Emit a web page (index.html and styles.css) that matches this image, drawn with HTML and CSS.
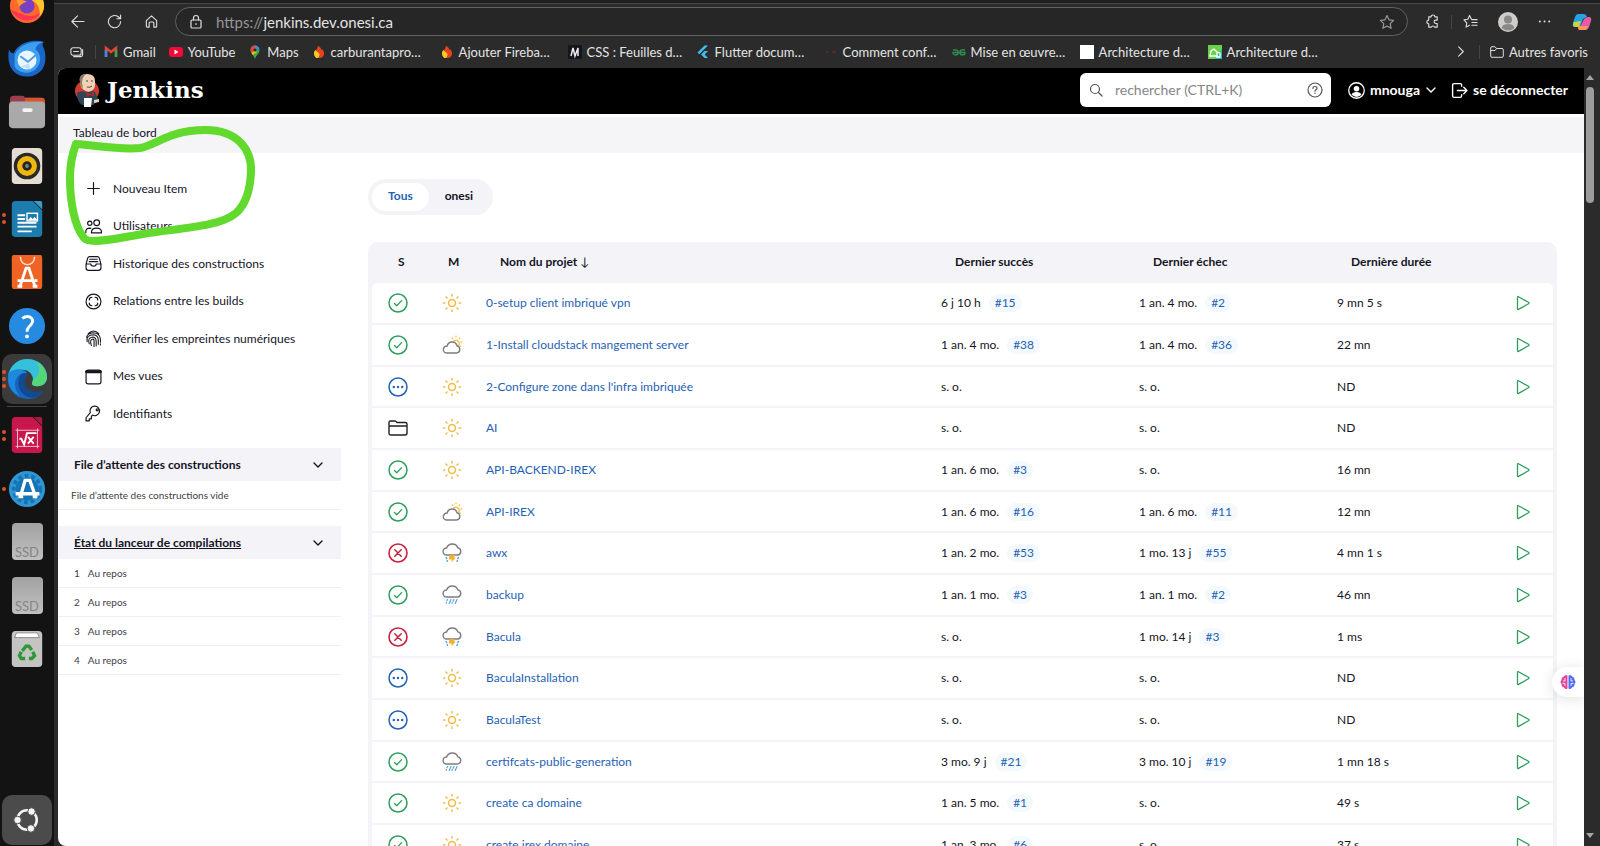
FILE: index.html
```html
<!DOCTYPE html>
<html lang="fr">
<head>
<meta charset="UTF-8">
<meta name="viewport" content="width=device-width, initial-scale=1.0">
<title>Tableau de bord [Jenkins]</title>
<link rel="stylesheet" href="styles.css">
</head>
<body>

<!-- Shared icons -->
<svg class="sprite" aria-hidden="true">
    <symbol id="ok" viewBox="0 0 20 20"><g fill="none" stroke="#2f9e5b" stroke-linecap="round" stroke-linejoin="round"><circle cx="10" cy="10" r="9" stroke-width="1.5"/><path d="M6.5 10.5l2.3 2.3 4.8-5.2" stroke-width="1.3"/></g></symbol>
    <symbol id="ko" viewBox="0 0 20 20"><g fill="none" stroke="#c8203f" stroke-linecap="round"><circle cx="10" cy="10" r="9" stroke-width="1.6"/><path d="M6.8 6.8l6.4 6.4M13.2 6.8l-6.4 6.4" stroke-width="1.5"/></g></symbol>
    <symbol id="new" viewBox="0 0 20 20"><circle cx="10" cy="10" r="9" fill="none" stroke="#1f62b5" stroke-width="1.5"/><g fill="#1f62b5"><circle cx="5.8" cy="10" r="1.2"/><circle cx="10" cy="10" r="1.2"/><circle cx="14.2" cy="10" r="1.2"/></g></symbol>
    <symbol id="folder" viewBox="0 0 20 20"><path d="M1 15V4.500Q1 3 2.500 3h4.200q.8 0 1.300.6L9 4.500h8.300Q19 4.500 19 6v9q0 2-2 2H3q-2 0-2-2zM1 8h18" fill="none" stroke="#222" stroke-width="1.400" stroke-linejoin="round"/></symbol>
    <symbol id="sunny" viewBox="0 0 20 20"><g fill="none" stroke="#f2bb45" stroke-width="1.500" stroke-linecap="round"><circle cx="10" cy="10" r="3.500"/><path d="M10 1.500v1.400M10 17.100v1.400M1.500 10h1.400M17.100 10h1.400M4 4l1 1M15 15l1 1M4 16l1-1M15 5l1-1"/></g></symbol>
    <symbol id="cloudy" viewBox="0 0 20 20"><g fill="none" stroke-linecap="round"><path d="M11.500 6.500a3.200 3.200 0 1 1 5 4M14 1.200v.6M19 7h.5M10.300 3l.4.400M17.700 3l-.4.400M18 11l.4.400" stroke="#f2bb45" stroke-width="1.300"/><path d="M4.500 18h10a3.600 3.600 0 0 0 .5-7.100A5 5 0 0 0 5.200 11 3.500 3.500 0 0 0 4.500 18z" stroke="#7c7c80" stroke-width="1.400"/></g></symbol>
    <symbol id="rain" viewBox="0 0 20 20"><path d="M4.500 12h11a3.600 3.600 0 0 0 .4-7.100A6 6 0 0 0 4.600 5 3.500 3.500 0 0 0 4.500 12z" fill="none" stroke="#7c7c80" stroke-width="1.400"/><path d="M5.500 14.500l-.7 1.200M9 14.500l-1.800 4M12 14.500l-.8 1.600M15 14.500l-1.800 4M4.500 17.500l-.3.700M10.300 17.500l-.4.800" fill="none" stroke="#4fa3e0" stroke-width="1.200" stroke-linecap="round"/></symbol>
    <symbol id="storm" viewBox="0 0 20 20"><path d="M4.500 12h11a3.600 3.600 0 0 0 .4-7.100A6 6 0 0 0 4.600 5 3.500 3.500 0 0 0 4.500 12z" fill="#fff" stroke="#7c7c80" stroke-width="1.400"/><path d="M7.500 12h5.500l-.8 2.500h1.600L9.500 19.500l.3-3H6.800z" fill="#f0b22e"/><path d="M4 14.500l.8 1M5 17.500l.6.800M16.500 14.500l-.8 1M15.500 17.500l-.6.800" fill="none" stroke="#4fa3e0" stroke-width="1.300" stroke-linecap="round"/></symbol>
    <symbol id="play" viewBox="0 0 16 16"><path d="M2.500 2.200v11.600q0 1.100 1 .6l10-5.600q1-.8 0-1.500l-10-5.600q-1-.6-1 .5z" fill="none" stroke="#2f9e5b" stroke-width="1.300" stroke-linejoin="round"/></symbol>
    <symbol id="chevron" viewBox="0 0 12 12"><path d="M2 4l4 4 4-4" fill="none" stroke="currentColor" stroke-width="1.400" stroke-linecap="round" stroke-linejoin="round"/></symbol>
    <symbol id="flame" viewBox="0 0 14 14"><path d="M2 9c0-4 3-3 4-8 3 1 3 3 3 4l1-1c4 4 2 9-3 9-3 0-5-2-5-4z" fill="#e8431f"/><path d="M2 8c0-1 .5-2 1.500-3 1 2 3 2 4 4 0 2-1 4-2 4C3.500 13 2 11 2 8z" fill="#ffc928"/></symbol>
</svg>

<!-- Ubuntu dock -->
<nav class="dock" aria-label="Dock">
    <button class="dock-item" aria-label="Firefox">
        <svg viewBox="0 0 40 40"><circle cx="20" cy="20" r="18" fill="#ff6a2b"/><path d="M3 24a18 18 0 0 0 34-2c-5 9-14 10-21 7z" fill="#ff3355"/><path d="M20 2c10 0 18 8 18 18 0 4-2 8-5 11 2-10-4-17-13-19z" fill="#ffc62b"/><circle cx="20" cy="20" r="8" fill="#7b3fc4"/><path d="M8 12c5 0 9 3 12 3-3 2-6 2-8 6z" fill="#ff9a2b"/></svg>
    </button>
    <button class="dock-item" aria-label="Thunderbird">
        <svg viewBox="0 0 40 40"><path d="M1 10c1 3 3 4 5 4C10 4 24-2 38 2c-2 2-2 3-1 5 3 6 3 14 1 20-4 10-16 14-26 10C2 33-1 22 1 10z" fill="#1a66c8"/><path d="M7 16C11 6 22 1 37 2c-6 2-8 5-8 8 6 4 7 14 0 21-8 6-18 4-22-3z" fill="#3d9ff0"/><circle cx="20" cy="21" r="10" fill="#eaf6ff"/><path d="M13 17l8 6 8-7" fill="none" stroke="#4a9be0" stroke-width="2"/><path d="M13 28l11 3-2-6z" fill="#bfe0f8"/></svg>
    </button>
    <button class="dock-item" aria-label="Fichiers">
        <svg viewBox="0 0 40 40"><path d="M2 7q0-4 4-4h9q2 0 3 2h17q4 0 4 4v12H2z" fill="#9c3f4c"/><path d="M18 5h17q4 0 4 4v4H18z" fill="#d4562b"/><rect x="1" y="9" width="38" height="28" rx="4" fill="#a9a9a9"/><rect x="15" y="16" width="11" height="4" rx="2" fill="#f4f4f4"/></svg>
    </button>
    <button class="dock-item" aria-label="Rhythmbox">
        <svg viewBox="0 0 40 40"><rect x="4" y="1" width="32" height="38" rx="4" fill="#e5ddd3"/><circle cx="20" cy="20" r="14" fill="#292929"/><circle cx="20" cy="20" r="10.500" fill="#efb70e"/><circle cx="20" cy="20" r="5" fill="#252525"/><circle cx="20" cy="20" r="2" fill="#808080"/></svg>
    </button>
    <button class="dock-item" aria-label="LibreOffice Writer">
        <span class="dots"><i></i><i></i></span>
        <svg viewBox="0 0 40 40"><path d="M4 5q0-4 4-4h18l10 10v24q0 4-4 4H8q-4 0-4-4z" fill="#1c7cae"/><path d="M27 1h7q2 0 2 2v7z" fill="#3b9cc6"/><path d="M10 16h8M10 20h8M10 24h20M10 28h20M10 33h15" stroke="#fff" stroke-width="2"/><rect x="20" y="14" width="11" height="8" fill="none" stroke="#fff" stroke-width="1.500"/><path d="M21 21l3-3 2 2 2-2 3 3z" fill="#fff"/></svg>
    </button>
    <button class="dock-item" aria-label="Logiciels">
        <svg viewBox="0 0 40 40"><path d="M6 2h28q2 0 2 3v30q0 3-3 3H7q-3 0-3-3L4 5q0-3 2-3z" fill="#ef6425"/><path d="M13 4c0 11 15 11 15 0" fill="none" stroke="#ffe5d8" stroke-width="1.500"/><path d="M13 34l6-18h3l6 18M10 29h21M10 35h5M26 35h5" fill="none" stroke="#fff" stroke-width="3"/></svg>
    </button>
    <button class="dock-item" aria-label="Aide">
        <svg viewBox="0 0 40 40"><circle cx="20" cy="20" r="19" fill="#268be0"/><path d="M15 12q6-4 10 0c3 4-1 7-3 9q-2 2-2 5" fill="none" stroke="#fff" stroke-width="3"/><circle cx="20" cy="31" r="2" fill="#fff"/></svg>
    </button>
    <button class="dock-item" aria-label="Microsoft Edge">
        <span class="dots"><i></i><i></i><i></i></span>
        <span class="tile active-tile"><svg viewBox="0 0 40 40"><path d="M1 16C-1 30 9 40 21 40c7 0 12-3 15-8-5 2-10 2-14-1-5-3-7-8-4-13-5-8-14-8-17-2z" fill="#1565c0"/><path d="M1 17C3 6 11 0 20 0c12 0 20 8 20 18 0 7-6 10-12 9-5-1-2-4-2-7-1-7-7-10-13-9-6 0-10 2-12 6z" fill="#35c0dc"/><path d="M30 3c6 3 10 9 10 15 0 7-6 10-12 9-5-1-2-4-2-7 6-2 8-9 4-17z" fill="#55d67b"/><path d="M17 13c-8 5-8 20 4 25 6 2 12-1 15-6-8 3-16 0-18-7-1-4 0-7 3-9 0-2-2-3-4-3z" fill="#124a91"/><path d="M2 14c5-5 14-5 18 0-9-1-12 6-12 12 0 4 2 8 5 11C4 34-1 24 2 14z" fill="#1e88dd"/></svg></span>
    </button>
    <span class="dock-line"></span>
    <button class="dock-item" aria-label="LibreOffice Math">
        <span class="dots"><i></i><i></i></span>
        <svg viewBox="0 0 40 40"><path d="M4 5q0-4 4-4h18l10 10v24q0 4-4 4H8q-4 0-4-4z" fill="#c8174c"/><path d="M27 1h7q2 0 2 2v7z" fill="#a91943"/><path d="M10 13v21M31 13v21M8 15h25M8 32h25" stroke="#f5bdcb"/><path d="M12 24h2l3 6 3-12h10M21 22l6 7M27 22l-6 7" fill="none" stroke="#fff" stroke-width="2"/></svg>
    </button>
    <button class="dock-item" aria-label="Mises à jour">
        <span class="dots"><i></i></span>
        <svg viewBox="0 0 40 40"><circle cx="20" cy="20" r="19" fill="#2f97d4"/><circle cx="20" cy="20" r="12" fill="#1674b5"/><circle cx="20" cy="20" r="14" fill="none" stroke="#1674b5" stroke-width="4" stroke-dasharray="4 3"/><path d="M13 28l5-17h5l6 17M8 25h25M11 28h5M26 28h5" fill="none" stroke="#fff" stroke-width="3.500"/></svg>
    </button>
    <button class="dock-item"><span class="disk">SSD</span></button>
    <button class="dock-item"><span class="disk">SSD</span></button>
    <button class="dock-item" aria-label="Corbeille">
        <svg viewBox="0 0 40 40"><rect x="4" y="1" width="32" height="38" rx="4" fill="#c4c4c2"/><path d="M7 8l2-5h22l2 5z" fill="#fff" stroke="#8c8c8c"/><g fill="none" stroke="#2b9a36" stroke-width="3.500"><path d="M15 22l4-5h3l3 4"/><path d="M26 23l2 4-3 3h-3"/><path d="M18 30h-4l-2-3 2-4"/></g></svg>
    </button>
    <button class="dock-item apps" aria-label="Afficher les applications">
        <span class="tile apps-tile"><svg viewBox="0 0 40 40"><circle cx="20" cy="20" r="15" fill="none" stroke="#f4f4f4" stroke-width="4"/><g fill="#f4f4f4" stroke="#4b4b4b" stroke-width="1.500"><circle cx="5.500" cy="20" r="5.800"/><circle cx="27" cy="7" r="5.800"/><circle cx="26" cy="33" r="5.800"/></g></svg></span>
    </button>
</nav>

<div class="browser">
    <div class="tabstrip"></div>

    <!-- Address bar -->
    <div class="toolbar">
        <button class="tool" aria-label="Retour"><svg viewBox="0 0 16 16"><path d="M15 8H2M8 2L2 8l6 6"/></svg></button>
        <button class="tool" aria-label="Actualiser"><svg viewBox="0 0 16 16"><path d="M14.500 8A6.500 6.500 0 1 1 12 3l2 1.500M14.500 1v4h-4"/></svg></button>
        <button class="tool" aria-label="Accueil"><svg viewBox="0 0 16 16"><path d="M2.500 7L8 2l5.500 5v6q0 1-1 1h-2V9.500q0-1-1-1h-3q-1 0-1 1V14h-2q-1 0-1-1z"/></svg></button>
        <label class="urlbar">
            <svg class="lock" viewBox="0 0 16 16"><rect x="3" y="6" width="10" height="8" rx="1"/><path d="M5.500 6V4q0-2.500 2.500-2.500T10.500 4v2M8 9.500v1"/></svg>
            <span class="url"><span class="scheme">https://</span>jenkins.dev.onesi.ca</span>
            <svg class="star" viewBox="0 0 16 16"><path d="M8 1.500l2 4.300 4.600.6-3.400 3.200.9 4.700L8 12l-4.100 2.300.9-4.700L1.400 6.400 6 5.800z"/></svg>
        </label>
        <button class="tool" aria-label="Extensions"><svg viewBox="0 0 16 16"><path d="M4 3h2.500a2 2 0 0 1 4 0H13v3.500h-1.500a1.800 1.800 0 0 0 0 3.600H13V14h-2.800a1.800 1.800 0 0 0-3.400 0H4v-3.500a2 2 0 0 1 0-4z"/></svg></button>
        <span class="tool-line"></span>
        <button class="tool" aria-label="Favoris"><svg viewBox="0 0 16 16"><path d="M9 5.500L7 1.500 5.200 5.600 1 6.300 4 9.500l-.7 4.500L7 12M9.500 6H15M9.500 9H15M9.500 12H15"/></svg></button>
        <button class="tool profile" aria-label="Profil"><svg viewBox="0 0 20 20"><circle cx="10" cy="10" r="10" fill="#cfcdcb"/><circle cx="10" cy="7.500" r="4" fill="#8b8988"/><path d="M3.500 16q1-4 6.500-4t6.500 4q-6 5-13 0z" fill="#8b8988"/></svg></button>
        <button class="tool" aria-label="Paramètres"><svg viewBox="0 0 16 16"><path d="M3 8h.1M8 8h.1M13 8h.1" stroke-width="2"/></svg></button>
        <button class="tool copilot" aria-label="Copilot"><svg viewBox="0 0 20 20"><path d="M6 2h6q2 0 3 3l-4 2-3 8H3q-3 0-2-4l2-6q1-3 3-3z" fill="#24a4e5"/><path d="M2 10l-1 2q0 3 2 3h4l2-6z" fill="#c8d541"/><path d="M15 5h2q3 0 2 4l-2 6q-1 3-3 3H8q-2 0-2-3h2l4-8z" fill="#e75aa8"/><path d="M7 14h9l-2 4H8q-2 0-2-3z" fill="#ff9662"/></svg></button>
    </div>

    <!-- Bookmarks -->
    <div class="bookmarks">
        <button class="tool" aria-label="Espaces"><svg viewBox="0 0 16 16"><rect x="2" y="4" width="11" height="8" rx="2.500"/><path d="M5 8h5M14.500 6v5.500q0 2-2 2H5"/></svg></button>
        <span class="tool-line"></span>
        <a class="bookmark first" href="#"><svg viewBox="0 0 14 14"><path d="M2 12V3l5 4 5-4v9" fill="none" stroke="#ea4335" stroke-width="2.500"/><path d="M2 12V5" stroke="#4285f4" stroke-width="2.500"/><path d="M12 12V5" stroke="#34a853" stroke-width="2.500"/></svg>Gmail</a>
        <a class="bookmark" href="#"><svg viewBox="0 0 14 14"><rect y="2" width="14" height="10" rx="3" fill="#f50a35"/><path d="M5.500 4.500v5l4-2.500z" fill="#fff"/></svg>YouTube</a>
        <a class="bookmark" href="#"><svg viewBox="0 0 14 14"><path d="M7 14C6 10 2.500 9 2.500 5a4.500 4.500 0 0 1 9 0C11.500 9 8 10 7 14z" fill="#34a853"/><path d="M2.500 5A4.500 4.500 0 0 1 7 .5L7 5 3.500 8z" fill="#ea4335"/><path d="M7 .5A4.500 4.500 0 0 1 11.300 4L7 5z" fill="#4285f4"/><path d="M3.500 8L7 5l2 2-4 3z" fill="#fbbc04"/><circle cx="7" cy="5" r="1.600" fill="#2b2b2b"/></svg>Maps</a>
        <a class="bookmark wide" href="#"><svg><use href="#flame"/></svg>carburantapro…</a>
        <a class="bookmark wide" href="#"><svg><use href="#flame"/></svg>Ajouter Fireba…</a>
        <a class="bookmark wide" href="#"><svg viewBox="0 0 14 14"><rect width="14" height="14" fill="#15151d"/><path d="M3 11l2-8 2 8 3-8v8" fill="none" stroke="#eee" stroke-width="1.500"/></svg>CSS : Feuilles d…</a>
        <a class="bookmark wide" href="#"><svg viewBox="0 0 14 14"><path d="M1.500 7.500L8.500.5H12L3.300 9.200zM5 9.500L8.500 6H12L8.700 9.500 12 13H8.500z" fill="#43bdf0"/></svg>Flutter docum…</a>
        <a class="bookmark wide" href="#"><svg viewBox="0 0 14 14"><path d="M2 6l3 2M8 7h4" stroke="#642b2b" stroke-width="1.500"/></svg>Comment conf…</a>
        <a class="bookmark wide" href="#"><svg viewBox="0 0 14 14"><path d="M1 5h3q2 0 2 2.500T3.500 10 1 7.500h12Q13 10 10.500 10T8 7.500 10 5h3" fill="none" stroke="#2c8d4d" stroke-width="1.400"/></svg>Mise en œuvre…</a>
        <a class="bookmark wide" href="#"><svg viewBox="0 0 14 14"><rect width="14" height="14" fill="#fff"/></svg>Architecture d…</a>
        <a class="bookmark wide" href="#"><svg viewBox="0 0 14 14"><rect width="14" height="14" fill="#6bd04a"/><path d="M7 14L14 4v10z" fill="#25b8b1"/><path d="M2 11h7V7L6 4 3 6zM9 7l3 1v4H8" fill="none" stroke="#fff" stroke-width="1.300"/></svg>Architecture d…</a>
        <button class="tool more" aria-label="Plus de favoris"><svg viewBox="0 0 16 16"><path d="M6 3l5 5-5 5"/></svg></button>
        <span class="tool-line"></span>
        <a class="bookmark others" href="#"><svg viewBox="0 0 14 14"><path d="M.7 11V3q0-1.300 1.300-1.300h3l1.500 1.800h5.500q1.300 0 1.300 1.300V11q0 1.300-1.300 1.300H2Q.7 12.300.7 11zM.7 5.500H5l1.500-2" fill="none" stroke="#ddd"/></svg>Autres favoris</a>
    </div>

    <div class="viewport">
        <div class="page">
            <header class="header">
                <a class="brand" href="#">
                    <svg viewBox="0 0 26 34"><ellipse cx="13" cy="18" rx="12" ry="11" fill="#cf3a32"/><path d="M3 20q4-3 9-1l8-1q5 6 3 11l-4 3H8q-5-3-5-12z" fill="#2f4656"/><path d="M6 9Q5 1 13 1t8 7q1 8-4 10-3 2-7-1-4-3-4-8z" fill="#efd2b6"/><path d="M6 9Q4 1 12 1 8 4 8 10l1 5q-3-2-3-6z" fill="#8b7a6b"/><path d="M12 8h2M17 8h2M13 14q3 1 5-1" stroke="#58453c" fill="none"/><path d="M12 19l4 2 4-2v4l-4-1-3 2z" fill="#b7262a"/><path d="M10 25h8l-1 9h-7z" fill="#fff"/><path d="M20 27l5-1v3l-5 1z" fill="#efd2b6"/></svg>
                    <span>Jenkins</span>
                </a>
                <label class="search">
                    <svg viewBox="0 0 16 16"><circle cx="7" cy="7" r="4.500"/><path d="M10.500 10.500l3.500 3.500"/></svg>
                    <input type="search" placeholder="rechercher (CTRL+K)" aria-label="rechercher">
                    <svg class="help" viewBox="0 0 16 16"><circle cx="8" cy="8" r="7"/><path d="M6 6.500q0-2 2-2t2 1.700q0 1-1 1.600t-1 1.400M8 11.200v.3"/></svg>
                </label>
                <a class="account" href="#"><svg viewBox="0 0 16 16"><circle cx="8" cy="8" r="7.300" fill="none" stroke="#fff" stroke-width="1.200"/><circle cx="8" cy="6.300" r="2.600" fill="#fff"/><path d="M3.300 12q1-2.500 4.700-2.500t4.700 2.500q-4.500 4-9.400 0z" fill="#fff"/></svg>mnouga<svg class="small"><use href="#chevron"/></svg></a>
                <a class="account" href="#"><svg viewBox="0 0 16 16"><path d="M10 4V3q0-1.500-1.500-1.500H3Q1.500 1.500 1.500 3v10q0 1.500 1.500 1.500h5.500Q10 14.500 10 13v-1M6 8h9M12 5l3 3-3 3" fill="none" stroke="#fff" stroke-width="1.300" stroke-linecap="round" stroke-linejoin="round"/></svg>se déconnecter</a>
            </header>

            <div class="breadcrumbs"><a href="#">Tableau de bord</a><svg viewBox="0 0 12 12"><path d="M4 2l4 4-4 4"/></svg></div>

            <div class="content">
                <aside class="side">
                    <ul class="tasks">
                        <li><a href="#"><svg viewBox="0 0 16 16"><path d="M8 2.500v11M2.500 8h11"/></svg>Nouveau Item</a></li>
                        <li><a href="#"><svg viewBox="0 0 16 16"><circle cx="4.500" cy="5" r="2"/><circle cx="11" cy="4.500" r="2.700"/><path d="M6 14q0-4.500 5-4.500t4.500 4.500zM.8 13.500q-.3-4 3.700-4l1 .2"/></svg>Utilisateurs</a></li>
                        <li><a href="#"><svg viewBox="0 0 16 16"><path d="M1 8.500L2.500 3Q3 1.500 4.500 1.500h7Q13 1.500 13.500 3L15 8.500V12q0 2.500-2.500 2.500h-9Q1 14.500 1 12zM1 8.500h4.500q0 2 2.500 2t2.500-2H15M4.500 4h7M4 6.300h8"/></svg>Historique des constructions</a></li>
                        <li><a href="#"><svg viewBox="0 0 16 16"><circle cx="8" cy="8" r="7"/><path d="M4 6.500Q4 4 6.500 4M9.500 4Q12 4 12 6.500M12 9.500Q12 12 9.500 12M6.500 12Q4 12 4 9.500"/></svg>Relations entre les builds</a></li>
                        <li><a href="#"><svg class="fine" viewBox="0 0 16 16"><path d="M3 3.500Q8-1.500 13 3.500M1.500 7Q2 3 8 2.500q6 .5 6.500 6v3M2 11Q1 4.500 8 4.500q4.500.5 4.500 5v4M4 13Q2 7 7.500 6.500q3 .5 3 4v4.500M6 14.500Q4 9 7.500 8.500q1.500.5 1 3.500v3.500M14.500 13v1"/></svg>Vérifier les empreintes numériques</a></li>
                        <li><a href="#"><svg viewBox="0 0 16 16"><rect x="1" y="2" width="14" height="13" rx="2"/><path d="M1.500 3.500h13" stroke-width="2.800"/></svg>Mes vues</a></li>
                        <li><a href="#"><svg viewBox="0 0 16 16"><path d="M7 9.500a4.500 4.500 0 1 0-2-2.300L1 12v3h3v-2h2v-2z"/><circle cx="11.500" cy="4.500" r="1"/></svg>Identifiants</a></li>
                    </ul>

                    <section class="pane">
                        <h2>File d’attente des constructions<svg><use href="#chevron"/></svg></h2>
                        <p class="pane-row empty">File d’attente des constructions vide</p>
                    </section>
                    <section class="pane">
                        <h2><a href="#">État du lanceur de compilations</a><svg><use href="#chevron"/></svg></h2>
                        <div class="pane-row"><span>1</span>Au repos</div>
                        <div class="pane-row"><span>2</span>Au repos</div>
                        <div class="pane-row"><span>3</span>Au repos</div>
                        <div class="pane-row"><span>4</span>Au repos</div>
                    </section>
                </aside>

                <main class="main">
                    <div class="tabs"><a class="tab current" href="#">Tous</a><a class="tab" href="#">onesi</a></div>

                    <table class="jobs">
                        <thead>
                            <tr><th class="c-icon">S</th><th class="c-icon">M</th><th class="c-name">Nom du projet&nbsp;<span class="sort">↓</span></th><th class="c-date">Dernier succès</th><th class="c-date">Dernier échec</th><th class="c-time">Dernière durée</th><th class="c-run"></th></tr>
                        </thead>
                        <tbody>
                            <tr><td><svg><use href="#ok"/></svg></td><td><svg><use href="#sunny"/></svg></td><td><a href="#">0-setup client imbriqué vpn</a></td><td>6 j 10 h<a class="build" href="#">#15</a></td><td>1 an. 4 mo.<a class="build" href="#">#2</a></td><td>9 mn 5 s</td><td><button aria-label="Lancer"><svg><use href="#play"/></svg></button></td></tr>
                            <tr><td><svg><use href="#ok"/></svg></td><td><svg><use href="#cloudy"/></svg></td><td><a href="#">1-Install cloudstack mangement server</a></td><td>1 an. 4 mo.<a class="build" href="#">#38</a></td><td>1 an. 4 mo.<a class="build" href="#">#36</a></td><td>22 mn</td><td><button aria-label="Lancer"><svg><use href="#play"/></svg></button></td></tr>
                            <tr><td><svg><use href="#new"/></svg></td><td><svg><use href="#sunny"/></svg></td><td><a href="#">2-Configure zone dans l'infra imbriquée</a></td><td>s. o.</td><td>s. o.</td><td>ND</td><td><button aria-label="Lancer"><svg><use href="#play"/></svg></button></td></tr>
                            <tr><td><svg><use href="#folder"/></svg></td><td><svg><use href="#sunny"/></svg></td><td><a href="#">AI</a></td><td>s. o.</td><td>s. o.</td><td>ND</td><td></td></tr>
                            <tr><td><svg><use href="#ok"/></svg></td><td><svg><use href="#sunny"/></svg></td><td><a href="#">API-BACKEND-IREX</a></td><td>1 an. 6 mo.<a class="build" href="#">#3</a></td><td>s. o.</td><td>16 mn</td><td><button aria-label="Lancer"><svg><use href="#play"/></svg></button></td></tr>
                            <tr><td><svg><use href="#ok"/></svg></td><td><svg><use href="#cloudy"/></svg></td><td><a href="#">API-IREX</a></td><td>1 an. 6 mo.<a class="build" href="#">#16</a></td><td>1 an. 6 mo.<a class="build" href="#">#11</a></td><td>12 mn</td><td><button aria-label="Lancer"><svg><use href="#play"/></svg></button></td></tr>
                            <tr><td><svg><use href="#ko"/></svg></td><td><svg><use href="#storm"/></svg></td><td><a href="#">awx</a></td><td>1 an. 2 mo.<a class="build" href="#">#53</a></td><td>1 mo. 13 j<a class="build" href="#">#55</a></td><td>4 mn 1 s</td><td><button aria-label="Lancer"><svg><use href="#play"/></svg></button></td></tr>
                            <tr><td><svg><use href="#ok"/></svg></td><td><svg><use href="#rain"/></svg></td><td><a href="#">backup</a></td><td>1 an. 1 mo.<a class="build" href="#">#3</a></td><td>1 an. 1 mo.<a class="build" href="#">#2</a></td><td>46 mn</td><td><button aria-label="Lancer"><svg><use href="#play"/></svg></button></td></tr>
                            <tr><td><svg><use href="#ko"/></svg></td><td><svg><use href="#storm"/></svg></td><td><a href="#">Bacula</a></td><td>s. o.</td><td>1 mo. 14 j<a class="build" href="#">#3</a></td><td>1 ms</td><td><button aria-label="Lancer"><svg><use href="#play"/></svg></button></td></tr>
                            <tr><td><svg><use href="#new"/></svg></td><td><svg><use href="#sunny"/></svg></td><td><a href="#">BaculaInstallation</a></td><td>s. o.</td><td>s. o.</td><td>ND</td><td><button aria-label="Lancer"><svg><use href="#play"/></svg></button></td></tr>
                            <tr><td><svg><use href="#new"/></svg></td><td><svg><use href="#sunny"/></svg></td><td><a href="#">BaculaTest</a></td><td>s. o.</td><td>s. o.</td><td>ND</td><td><button aria-label="Lancer"><svg><use href="#play"/></svg></button></td></tr>
                            <tr><td><svg><use href="#ok"/></svg></td><td><svg><use href="#rain"/></svg></td><td><a href="#">certifcats-public-generation</a></td><td>3 mo. 9 j<a class="build" href="#">#21</a></td><td>3 mo. 10 j<a class="build" href="#">#19</a></td><td>1 mn 18 s</td><td><button aria-label="Lancer"><svg><use href="#play"/></svg></button></td></tr>
                            <tr><td><svg><use href="#ok"/></svg></td><td><svg><use href="#sunny"/></svg></td><td><a href="#">create ca domaine</a></td><td>1 an. 5 mo.<a class="build" href="#">#1</a></td><td>s. o.</td><td>49 s</td><td><button aria-label="Lancer"><svg><use href="#play"/></svg></button></td></tr>
                            <tr><td><svg><use href="#ok"/></svg></td><td><svg><use href="#sunny"/></svg></td><td><a href="#">create irex domaine</a></td><td>1 an. 3 mo.<a class="build" href="#">#6</a></td><td>s. o.</td><td>37 s</td><td><button aria-label="Lancer"><svg><use href="#play"/></svg></button></td></tr>
                        </tbody>
                    </table>
                </main>
            </div>

            <button class="assistant" aria-label="Assistant">
                <svg viewBox="0 0 16 16"><path d="M7.500 1.500Q5 0 4 2.500 1 3 1.500 6-.5 8 1.500 10q-.5 3 2.500 3.500 1.500 2.500 3.500 1z" fill="#e0489c"/><path d="M8.500 1.500Q11 0 12 2.500q3 .5 2.500 3.500 2 2 0 4 .5 3-2.500 3.500-1.500 2.500-3.500 1z" fill="#526ff0"/><path d="M5 4v3H3M5 12V9.500H2.500M11 4v3h2M11 12V9.500h2.500" fill="none" stroke="#fff" stroke-width=".8"/></svg>
            </button>
        </div>
        <div class="scrollbar"><span class="up"></span><span class="thumb"></span><span class="down"></span></div>
    </div>
</div>

<!-- Hand-drawn highlight -->
<svg class="marker" viewBox="0 0 200 130" aria-hidden="true"><path d="M16 24C40 26 62 30 80 28C96 25 110 10 145 10C178 10 192 30 191 52C190 75 184 86 176 93C160 107 120 108 83 114C58 118 29 125 24 118C14 106 10 80 10 58C10 42 13 32 16 24"/></svg>

</body>
</html>
```
FILE: styles.css
```css
* { box-sizing: border-box; }
body {
    display: flex;
    height: 100vh;
    margin: 0;
    overflow: hidden;
    background: #131313;
    color: #14141f;
    font: 12px/16px Lato, "Noto Sans", sans-serif;
}
a { color: inherit; text-decoration: none; }
button { padding: 0; border: 0; background: none; color: inherit; font: inherit; }
svg { flex-shrink: 0; }
.sprite { position: absolute; width: 0; height: 0; }

/* Dock */
.dock { display: flex; flex-direction: column; width: 54px; margin-top: -21px; flex-shrink: 0; }
.dock-item {
    position: relative;
    display: flex;
    align-items: center;
    justify-content: center;
    height: 53px;
    flex-shrink: 0;
}
.dock-item:nth-of-type(3n) { height: 54px; }
.dock-item svg { width: 38px; height: 38px; }
.tile { display: flex; align-items: center; justify-content: center; width: 50px; height: 50px; border-radius: 10px; }
.active-tile { background: #3b3b3b; }
.active-tile svg { width: 40px; height: 40px; }
.apps { margin-top: auto; }
.apps-tile { background: #4b4b4b; }
.apps-tile svg { width: 26px; height: 26px; overflow: visible; }
.dock-line { height: 1px; margin: 1px 7px; background: #444; flex-shrink: 0; }
.dots { position: absolute; left: 2px; display: flex; flex-direction: column; gap: 3px; z-index: 1; }
.dots i { width: 4px; height: 4px; border-radius: 50%; background: #d9532c; }
.disk {
    display: flex;
    align-items: flex-end;
    justify-content: center;
    width: 31px;
    height: 37px;
    border-radius: 4px;
    background: linear-gradient(#a2a2a2, #c0c0c0);
    color: #858585;
    font-size: 13px;
    overflow: hidden;
}

/* Browser chrome */
.browser { display: flex; flex-direction: column; flex: 1; min-width: 0; background: #2b2b2b; color: #e4e4e4; }
.tabstrip { height: 4px; background: #1f1f1f; border-bottom: 1px solid #484848; }
.toolbar { display: flex; align-items: center; height: 35px; padding-left: 5px; }
.tool { display: flex; align-items: center; justify-content: center; width: 37px; height: 24px; }
.tool svg { width: 15px; height: 15px; }
.tool svg, .urlbar svg { fill: none; stroke: #dedede; stroke-width: 1.2; stroke-linecap: round; stroke-linejoin: round; }
.tool.profile svg, .tool.copilot svg { width: 20px; height: 20px; stroke: none; }
.tool-line { width: 1px; height: 14px; background: #454545; }
.urlbar {
    display: flex;
    align-items: center;
    flex: 1;
    gap: 12px;
    height: 29px;
    margin: 0 6px 0 5px;
    padding: 0 12px;
    border: 1px solid #626262;
    border-radius: 15px;
    background: #262626;
    font-size: 15px;
}
.urlbar svg { width: 16px; height: 16px; }
.urlbar .star { stroke: #999; }
.url { flex: 1; }
.scheme { color: #969696; }

.bookmarks { display: flex; align-items: center; height: 29px; padding: 0 12px 4px 4px; font-size: 13px; }
.bookmark { display: flex; align-items: center; gap: 5px; margin-left: 13px; white-space: nowrap; }
.bookmark svg { width: 14px; height: 14px; }
.bookmark.first { margin-left: 8px; }
.bookmark.wide { width: 115px; }
.more { margin-left: auto; }
.bookmark.others { margin-left: 10px; }

.viewport { display: flex; flex: 1; min-height: 0; padding-left: 4px; }
.page {
    position: relative;
    flex: 1;
    min-width: 0;
    overflow: hidden;
    border-radius: 8px 0 0 8px;
    background: #fff;
    color: #14141f;
}
.scrollbar { display: flex; flex-direction: column; align-items: center; width: 16px; padding: 7px 4px 8px 0; }
.thumb { width: 8px; height: 116px; margin-top: 7px; border-radius: 4px; background: #9c9c9c; }
.up, .down { border: 4px solid transparent; }
.up { border-top: 0; border-bottom: 5px solid #a5a5a5; }
.down { margin-top: auto; border-bottom: 0; border-top: 5px solid #a5a5a5; }

/* Jenkins header */
.header { display: flex; align-items: center; height: 46px; padding: 0 16px 2px; background: #000; color: #fff; }
.brand { display: flex; align-items: center; gap: 7px; margin-right: auto; font: bold 23px/28px "DejaVu Serif", serif; }
.brand svg { width: 26px; height: 34px; }
.search {
    display: flex;
    align-items: center;
    width: 251px;
    height: 34px;
    padding: 0 8px;
    border-radius: 6px;
    background: #fff;
}
.search svg { width: 16px; height: 16px; fill: none; stroke: #555; stroke-width: 1.2; stroke-linecap: round; }
.search input { flex: 1; min-width: 0; padding: 0 11px; border: 0; outline: 0; background: none; font: inherit; font-size: 14px; }
.search input::placeholder { color: #85858a; }
.account { display: flex; align-items: center; gap: 5px; margin-left: 17px; font-size: 14px; font-weight: 700; }
.account svg { width: 17px; height: 17px; }
.account .small { width: 12px; height: 12px; }
.account + .account { margin-left: 14px; }

.breadcrumbs {
    display: flex;
    align-items: center;
    gap: 10px;
    height: 36px;
    margin-top: 3px;
    padding: 0 15px 4px;
    background: #f5f5f7;
    font-size: 12px;
}
.breadcrumbs svg { width: 9px; height: 9px; fill: none; stroke: #aaa; }

/* Sidebar */
.content { display: flex; gap: 27px; padding-right: 27px; }
.side { width: 283px; flex-shrink: 0; }
.tasks { margin: 17px 0 16px; padding: 0 0 0 27px; list-style: none; }
.tasks a { display: flex; align-items: center; gap: 11px; height: 37px; }
.tasks li:nth-child(even) a { height: 38px; }
.tasks svg { width: 17px; height: 17px; fill: none; stroke: #14141f; stroke-width: 1.1; stroke-linecap: round; stroke-linejoin: round; }
.tasks .fine { stroke-width: 1; }
.pane { margin-bottom: 16px; font-size: 10px; color: #404048; }
.pane h2 {
    display: flex;
    align-items: center;
    justify-content: space-between;
    height: 33px;
    margin: 0;
    padding: 0 17px 0 16px;
    background: #f3f3f8;
    color: #14141f;
    font-size: 12px;
    font-weight: 700;
}
.pane h2 svg { width: 12px; height: 12px; }
.pane h2 a { text-decoration: underline; }
.pane-row { display: flex; align-items: center; gap: 8px; height: 29px; margin: 0; padding: 0 16px; border-bottom: 1px solid #f0f0f3; }
.pane-row.empty { padding: 0 13px; }

/* Job list */
.main { flex: 1; min-width: 0; padding-top: 26px; }
.tabs { display: inline-flex; padding: 4px; border-radius: 18px; background: #f3f3f8; font-size: 12px; font-weight: 700; }
.tab { padding: 5px 16px 7px; border-radius: 14px; }
.tab.current { background: #fff; color: #1f62b5; }
.jobs {
    width: 100%;
    margin-top: 27px;
    padding: 0 2px;
    table-layout: fixed;
    border-collapse: separate;
    border-spacing: 0 2px;
    border-radius: 10px 10px 0 0;
    background: #f3f3f8;
}
.jobs th { height: 37px; padding: 0 14px 2px; text-align: left; font-size: 12px; font-weight: 700; white-space: nowrap; }
.jobs td { height: 40px; padding: 0; background: #fff; white-space: nowrap; }
.jobs tbody tr:nth-child(3n) td { height: 39px; }
.jobs td:first-child { border-left: 2px solid #f3f3f8; padding-left: 16px; }
.jobs td:nth-child(2) { padding-left: 18px; }
.jobs td:last-child { border-right: 2px solid #f3f3f8; text-align: center; }
.jobs tbody tr:first-child td:first-child { border-top-left-radius: 6px; }
.jobs tbody tr:first-child td:last-child { border-top-right-radius: 6px; }
.jobs svg { display: block; width: 20px; height: 20px; }
.jobs td a { color: #1f62b5; }
.jobs th.c-icon { width: 54px; padding: 0 0 2px 28px; }
.jobs th.c-icon + .c-icon { width: 62px; padding-left: 24px; }
.c-date { width: 198px; }
.c-time { width: 156px; }
.c-run { width: 62px; }
.sort { font-weight: 400; }
.jobs button { display: inline-block; vertical-align: middle; }
.jobs button svg { width: 16px; height: 16px; }
.jobs td .build { display: inline-block; margin-left: 8px; padding: 1px 6px; border-radius: 9px; background: #f3f9fd; }

.assistant {
    position: absolute;
    right: 0;
    top: 599px;
    display: flex;
    align-items: center;
    width: 32px;
    height: 30px;
    padding-left: 8px;
    border-radius: 15px 0 0 15px;
    background: #fff;
    box-shadow: 0 2px 14px rgba(0, 0, 0, .12);
}
.assistant svg { width: 16px; height: 16px; }

.marker { position: absolute; left: 60px; top: 120px; width: 200px; height: 130px; pointer-events: none; }
.marker path { fill: none; stroke: #61d92d; stroke-width: 8; stroke-linecap: round; stroke-linejoin: round; }
```
